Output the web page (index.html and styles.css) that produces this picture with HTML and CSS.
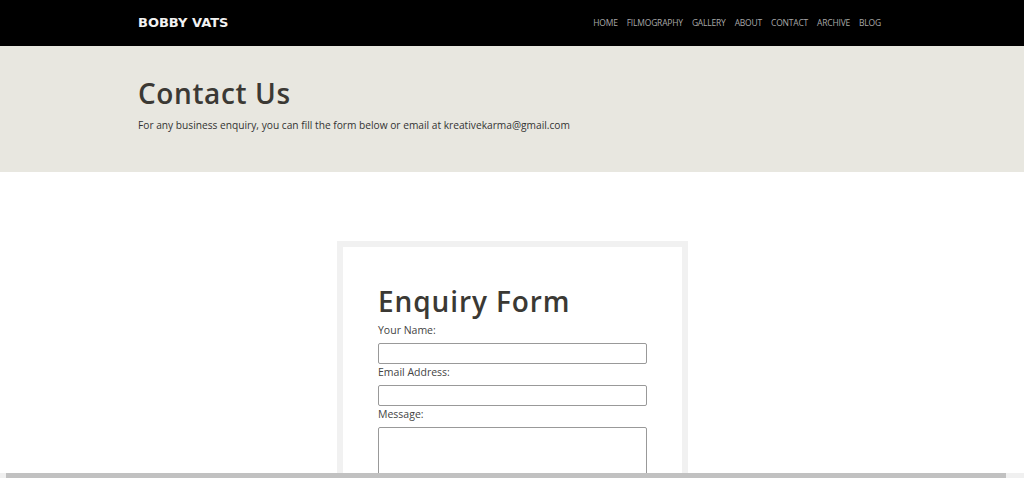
FILE: index.html
```html
<!DOCTYPE html>
<html>
  <head>
    <meta charset="UTF-8">
    <title>Contact - Bobby Vats</title>
    <link rel="stylesheet" href="styles.css">
  </head>
  <body>
    <header class="topbar">
      <div class="container topbar-inner">
        <a class="logo" href="#">BOBBY VATS</a>
        <nav class="nav">
          <a href="#">HOME</a>
          <a href="#">FILMOGRAPHY</a>
          <a href="#">GALLERY</a>
          <a href="#">ABOUT</a>
          <a href="#">CONTACT</a>
          <a href="#">ARCHIVE</a>
          <a href="#">BLOG</a>
        </nav>
      </div>
    </header>

    <section class="banner">
      <div class="container">
        <h1>Contact Us</h1>
        <p>For any business enquiry, you can fill the form below or email at kreativekarma@gmail.com</p>
      </div>
    </section>

    <section class="content">
      <form class="enquiry" action="/" method="post">
        <h2>Enquiry Form</h2>
        <label for="name">Your Name:</label>
        <input type="text" id="name" name="name">
        <label for="email">Email Address:</label>
        <input type="email" id="email" name="email">
        <label for="message">Message:</label>
        <textarea id="message" name="message" rows="6"></textarea>
      </form>
    </section>

    <div class="hscroll"><span class="thumb"></span></div>
  </body>
</html>
```

FILE: styles.css
```css
body {
  margin: 0;
  font-family: "Open Sans", sans-serif;
  background-color: white;
  color: #333;
}

.container {
  width: 748px;
  margin: 0 auto;
}

.topbar {
  background-color: #000;
  height: 46px;
}

.topbar-inner {
  display: flex;
  align-items: center;
  justify-content: space-between;
  height: 100%;
}

.logo {
  color: #f2f2f2;
  text-decoration: none;
  font-family: "DejaVu Sans", sans-serif;
  font-weight: bold;
  font-size: 13px;
  margin-top: -1px;
}

.nav {
  display: flex;
  gap: 9px;
  margin-right: 5px;
  margin-top: -1px;
}

.nav a {
  color: #a8a8a8;
  text-decoration: none;
  font-size: 8.5px;
  letter-spacing: -0.2px;
}

.banner {
  background-color: #e8e7e0;
  height: 126px;
  padding-top: 1px;
  box-sizing: border-box;
}

.banner h1 {
  margin: 28px 0 0;
  font-family: "Open Sans", sans-serif;
  font-weight: 600;
  font-size: 28px;
  line-height: 36px;
  color: #3b3934;
  letter-spacing: 0.6px;
}

.banner p {
  margin: 7px 0 0;
  font-size: 10.2px;
  color: #333;
}

.content {
  padding-top: 69px;
}

.enquiry {
  margin-left: 337px;
  border: 6px solid #f1f1f1;
  border-bottom: none;
  padding: 36px 35px 20px;
  width: 269px;
}

.enquiry h2 {
  margin: 0 0 4px;
  font-family: "Open Sans", sans-serif;
  font-weight: 600;
  font-size: 28px;
  line-height: 36px;
  color: #3b3934;
  letter-spacing: 0.9px;
}

label {
  display: block;
  font-size: 10.5px;
  line-height: 14px;
  color: #444;
  margin-bottom: 6px;
}

input,
textarea {
  display: block;
  width: 100%;
  box-sizing: border-box;
  border: 1px solid #999;
  border-radius: 2px;
  height: 21px;
  margin: 0 0 1px;
  font-family: inherit;
}

textarea {
  height: 80px;
  resize: none;
}

.hscroll {
  position: fixed;
  left: 0;
  right: 0;
  bottom: 0;
  height: 5px;
  background-color: #f0f0f0;
}

.hscroll .thumb {
  position: absolute;
  left: 6px;
  right: 18px;
  top: 0;
  bottom: 0;
  background-color: #c1c1c1;
}
```
